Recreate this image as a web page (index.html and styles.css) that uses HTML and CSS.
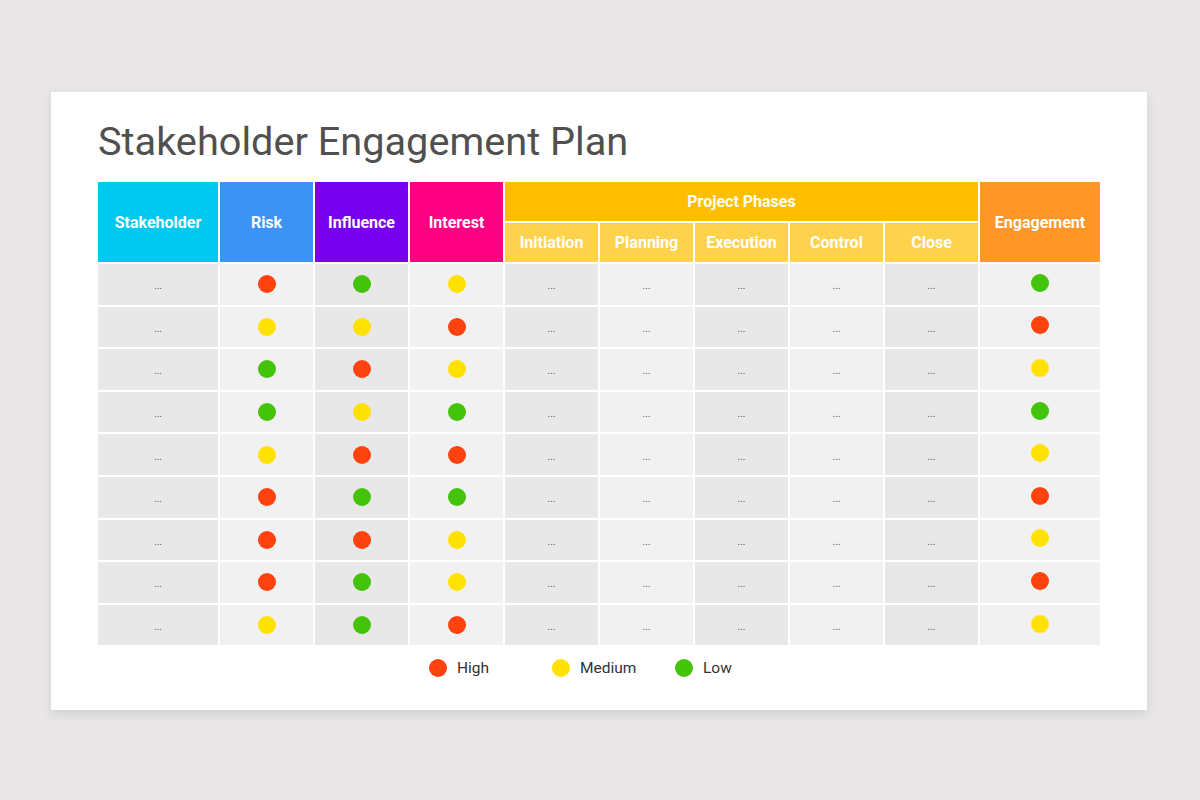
FILE: index.html
```html
<!DOCTYPE html>
<html lang="en">
<head>
<meta charset="utf-8">
<title>Stakeholder Engagement Plan</title>
<link rel="stylesheet" href="styles.css">
</head>
<body>
<div class="card">
  <h1 class="title">Stakeholder Engagement Plan</h1>
  <div class="table">
    <div class="hd span2 c-stake">Stakeholder</div>
    <div class="hd span2 c-risk">Risk</div>
    <div class="hd span2 c-infl">Influence</div>
    <div class="hd span2 c-int">Interest</div>
    <div class="hd c-phases">Project Phases</div>
    <div class="hd span2 c-eng">Engagement</div>
    <div class="hd c-sub">Initiation</div>
    <div class="hd c-sub">Planning</div>
    <div class="hd c-sub">Execution</div>
    <div class="hd c-sub">Control</div>
    <div class="hd c-sub">Close</div>
  </div>
  <div class="legend">
    <div class="legend-item"><span class="dot red"></span><span>High</span></div>
    <div class="legend-item"><span class="dot yellow"></span><span>Medium</span></div>
    <div class="legend-item"><span class="dot green"></span><span>Low</span></div>
  </div>
</div>
<script src="app.js"></script>
</body>
</html>
```

FILE: app.js
```js
(function () {
  var rows = [
    ["red", "green", "yellow", "green"],
    ["yellow", "yellow", "red", "red"],
    ["green", "red", "yellow", "yellow"],
    ["green", "yellow", "green", "green"],
    ["yellow", "red", "red", "yellow"],
    ["red", "green", "green", "red"],
    ["red", "red", "yellow", "yellow"],
    ["red", "green", "yellow", "red"],
    ["yellow", "green", "red", "yellow"]
  ];
  var table = document.querySelector(".table");
  function cell(cls, content) {
    var d = document.createElement("div");
    d.className = "cell " + cls;
    if (content === "...") {
      var s = document.createElement("span");
      s.className = "ell";
      s.textContent = "...";
      d.appendChild(s);
    } else if (content) {
      var dot = document.createElement("span");
      dot.className = "dot " + content;
      d.appendChild(dot);
    }
    table.appendChild(d);
  }
  rows.forEach(function (r) {
    cell("dark", "...");
    cell("light", r[0]);
    cell("dark", r[1]);
    cell("light", r[2]);
    cell("dark", "...");
    cell("light", "...");
    cell("dark", "...");
    cell("light", "...");
    cell("dark", "...");
    cell("light eng", r[3]);
  });
})();
```

FILE: styles.css
```css
html, body {
  margin: 0;
  padding: 0;
}
body {
  background: #e8e6e7;
  font-family: Roboto, "Liberation Sans", Arial, sans-serif;
  width: 1200px;
  height: 800px;
  overflow: hidden;
}
.card {
  margin: 92px 0 0 51px;
  width: 1096px;
  height: 618px;
  box-sizing: border-box;
  background: #ffffff;
  box-shadow: 0 4px 10px rgba(0, 0, 0, 0.10);
  padding: 26px 0 0 47px;
}
.title {
  margin: 0;
  font-weight: 400;
  font-size: 39.7px;
  line-height: 47px;
  color: #505050;
}
.table {
  margin-top: 17px;
  width: 1002px;
  display: grid;
  grid-template-columns: 120px repeat(8, 93px) 120px;
  grid-template-rows: 39px 39px repeat(9, 40.6px);
  gap: 2px;
  background: #ffffff;
}
.hd {
  display: flex;
  align-items: center;
  justify-content: center;
  color: #ffffff;
  font-weight: 700;
  font-size: 16px;
  white-space: nowrap;
}
.span2 {
  grid-row: span 2;
}
.c-stake { background: #00c9ef; }
.c-risk { background: #3d93f5; }
.c-infl { background: #7700ee; }
.c-int { background: #ff0082; }
.c-phases {
  grid-column: span 5;
  background: #ffbf00;
}
.c-eng { background: #ff9628; }
.c-sub {
  background: #ffd24e;
}
.cell {
  display: flex;
  align-items: center;
  justify-content: center;
}
.cell.dark { background: #e8e8e8; }
.cell.light { background: #f1f1f1; }
.cell.eng .dot {
  margin-top: -3px;
}
.ell {
  font-size: 10px;
  color: #555555;
  line-height: 1;
  margin-top: 4px;
}
.dot {
  display: inline-block;
  width: 18px;
  height: 18px;
  border-radius: 50%;
}
.dot.red { background: #ff420e; }
.dot.yellow { background: #ffe200; }
.dot.green { background: #43c40a; }
.legend {
  display: flex;
  margin-top: 14px;
  padding-left: 331px;
}
.legend-item {
  width: 123px;
  display: flex;
  align-items: center;
  gap: 10px;
  font-size: 15.5px;
  color: #333333;
  line-height: 18px;
}
```
